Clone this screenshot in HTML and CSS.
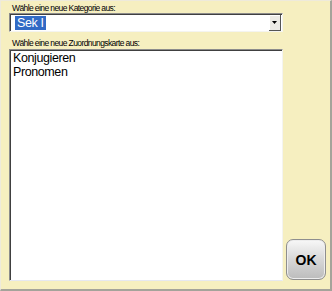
FILE: index.html
```html
<!DOCTYPE html>
<html lang="de">
<head>
  <meta charset="UTF-8">
  <title>Zuordnungskarte wählen</title>
  <link rel="stylesheet" href="styles.css">
</head>
<body>

  <div class="window">
    <label class="caption">Wähle eine neue Kategorie aus:</label>
    <div class="combo">
      <span class="combo-value"><span class="selected">Sek I</span></span>
      <span class="combo-btn">
        <svg width="5" height="3" viewBox="0 0 5 3"><path d="M0 0h5L2.5 3z" fill="#000"/></svg>
      </span>
    </div>

    <label class="caption second">Wähle eine neue Zuordnungskarte aus:</label>
    <div class="bottom-row">
      <ul class="listbox">
        <li>Konjugieren</li>
        <li>Pronomen</li>
      </ul>
      <button class="ok">OK</button>
    </div>
  </div>

</body>
</html>
```

FILE: styles.css
```css
body {
  margin: 0;
  font-family: "Liberation Sans", Arial, sans-serif;
}
.window {
  box-sizing: border-box;
  width: 332px;
  height: 291px;
  background: #f6efc0;
  border-top: 1px solid #eeeadb;
  border-left: 1px solid #eeeadb;
  border-right: 2px solid #a4a39a;
  border-bottom: 2px solid #a4a39a;
  padding: 2px 4px 8px 8px;
  display: flex;
  flex-direction: column;
}
.caption {
  display: block;
  font-size: 8.5px;
  line-height: 10px;
  letter-spacing: -0.6px;
  color: #000;
  padding-left: 3px;
}
.caption.second {
  margin-top: 6px;
  margin-bottom: 1px;
}
.combo {
  box-sizing: border-box;
  width: 274px;
  height: 20px;
  display: flex;
  background: #fff;
  border-top: 1px solid #8c8c8c;
  border-left: 1px solid #8c8c8c;
  border-right: 1px solid #f4f4f0;
  border-bottom: 1px solid #f4f4f0;
  box-shadow: inset 1px 1px 0 #404040;
  padding: 2px 1px 1px 2px;
}
.combo-value {
  flex: 1;
  padding-left: 3px;
  font-size: 12.5px;
  line-height: 14px;
  letter-spacing: -0.4px;
}
.selected {
  display: inline-block;
  background: #316ac5;
  color: #fff;
  padding: 0 2px;
}
.combo-btn {
  width: 11px;
  display: flex;
  align-items: center;
  justify-content: center;
  background: #ecebe6;
  border-right: 1px solid #555;
  border-bottom: 1px solid #555;
  box-shadow: inset 1px 1px 0 #fff;
  margin: -1px 0 -1px 0;
}
.bottom-row {
  flex: 1;
  display: flex;
  align-items: flex-end;
  gap: 3px;
}
.listbox {
  box-sizing: border-box;
  width: 274px;
  height: 232px;
  margin: 0;
  padding: 1px 1px;
  list-style: none;
  background: #fff;
  border-top: 1px solid #8c8c8c;
  border-left: 1px solid #8c8c8c;
  border-right: 1px solid #f4f4f0;
  border-bottom: 1px solid #e6e8f0;
  box-shadow: inset 1px 1px 0 #404040;
  font-size: 12.5px;
  line-height: 14px;
  letter-spacing: -0.4px;
  color: #000;
}
.listbox li {
  padding-left: 2px;
}
.ok {
  width: 40px;
  height: 41px;
  margin-bottom: 1px;
  border: 1px solid #8e8e8e;
  border-radius: 7px;
  background: linear-gradient(#f8f8f8, #dadada 45%, #bcbcbc);
  box-shadow: inset 0 0 0 1px #ededed;
  font-family: "Liberation Sans", Arial, sans-serif;
  font-weight: bold;
  font-size: 14px;
  color: #000;
  padding: 0;
}
```
